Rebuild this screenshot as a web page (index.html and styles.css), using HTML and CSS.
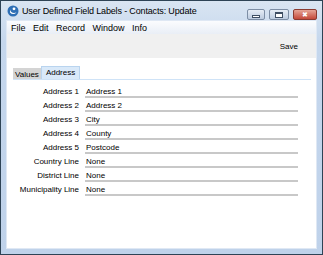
FILE: index.html
```html
<!DOCTYPE html>
<html lang="en">
<head>
  <meta charset="UTF-8" />
  <title>User Defined Field Labels - Contacts: Update</title>
  <link rel="stylesheet" href="styles.css">
</head>
<body>
  <div class="window">
    <div class="titlebar">
      <svg class="app-icon" width="12" height="12" viewBox="0 0 12 12">
        <circle cx="6" cy="6" r="5.5" fill="#2f6fb5"/>
        <path d="M3 4.5 Q4 9 9.5 7.5 Q6 10.5 3 7.5 Z" fill="#ffffff"/>
        <circle cx="7" cy="3.8" r="1.4" fill="#ffffff"/>
      </svg>
      <span class="title">User Defined Field Labels - Contacts: Update</span>
      <div class="controls">
        <span class="ctl min"><span class="min-glyph"></span></span>
        <span class="ctl max"><span class="max-glyph"></span></span>
        <span class="ctl close"><span class="x-glyph">&#x2716;</span></span>
      </div>
    </div>

    <div class="client">
      <div class="menubar">
        <span>File</span>
        <span>Edit</span>
        <span>Record</span>
        <span>Window</span>
        <span>Info</span>
      </div>

      <div class="toolbar">
        <span class="save">Save</span>
      </div>

      <div class="content">
        <div class="tabs">
          <span class="tab">Values</span>
          <span class="tab active">Address</span>
        </div>

        <div class="fields">
          <div class="row"><label>Address 1</label><span class="value">Address 1</span></div>
          <div class="row"><label>Address 2</label><span class="value">Address 2</span></div>
          <div class="row"><label>Address 3</label><span class="value">City</span></div>
          <div class="row"><label>Address 4</label><span class="value">County</span></div>
          <div class="row"><label>Address 5</label><span class="value">Postcode</span></div>
          <div class="row"><label>Country Line</label><span class="value">None</span></div>
          <div class="row"><label>District Line</label><span class="value">None</span></div>
          <div class="row"><label>Municipality Line</label><span class="value">None</span></div>
        </div>
      </div>
    </div>
  </div>
</body>
</html>
```

FILE: styles.css
```css
body {
  margin: 0;
  font-family: "Liberation Sans", Arial, sans-serif;
  font-size: 8px;
  color: #000;
}

.window {
  width: 323px;
  height: 255px;
  box-sizing: border-box;
  border: 1px solid #2e4355;
  background: linear-gradient(#d9e5f2, #c5d7ed 40px, #bfd2ea);
  display: flex;
  flex-direction: column;
}

.titlebar {
  height: 19px;
  display: flex;
  align-items: center;
  padding: 0 5px 0 6px;
}

.app-icon {
  margin-right: 3px;
}

.title {
  font-size: 9px;
  letter-spacing: -0.15px;
  color: #000;
  flex: 1;
}

.controls {
  display: flex;
  gap: 4px;
  align-self: flex-start;
  margin-top: 8px;
}

.ctl {
  width: 18px;
  height: 11px;
  box-sizing: border-box;
  border: 1px solid #7d8ea5;
  border-radius: 2px;
  background: linear-gradient(#e6edf6, #bccbdf);
  display: flex;
  align-items: center;
  justify-content: center;
}

.ctl.max {
  width: 20px;
}

.ctl.close {
  width: 24px;
  border-color: #8a3b31;
  background: linear-gradient(#e6a597, #c4493a);
}

.min-glyph {
  width: 6px;
  height: 1px;
  border: 1px solid #3e4e63;
  background: #fff;
  margin-top: 3px;
}

.max-glyph {
  width: 6px;
  height: 3px;
  border: 1px solid #3e4e63;
  border-top-width: 2px;
  background: #fff;
}

.x-glyph {
  color: #fff;
  font-size: 7px;
  line-height: 1;
}

.client {
  flex: 1;
  margin: 0 5px 5px 5px;
  border: 1px solid #dfe8f4;
  background: #fff;
  display: flex;
  flex-direction: column;
}

.menubar {
  height: 13px;
  display: flex;
  align-items: center;
  padding-left: 4px;
  font-size: 9px;
  background: linear-gradient(#fbfcfe, #e9eef6);
}

.menubar span {
  margin-right: 7.5px;
}

.toolbar {
  height: 24px;
  background: #f0f0f0;
  display: flex;
  align-items: center;
  justify-content: flex-end;
  padding-right: 18px;
}

.content {
  flex: 1;
  padding: 8px 5px 0 6px;
}

.tabs {
  display: flex;
  border-bottom: 1px solid #cfe3f7;
  height: 13px;
}

.tab {
  padding: 2px 2px 0 2px;
  background: #d4d4d4;
  color: #000;
  margin-top: 2px;
}

.tab.active {
  background: #d9e9f9;
  border: 1px solid #b9d4ef;
  border-bottom: none;
  margin-top: 0;
  padding: 1px 4px 0 4px;
}

.fields {
  padding-top: 5px;
}

.row {
  display: flex;
  align-items: flex-end;
  height: 14px;
}

.row label {
  width: 66px;
  text-align: right;
  padding-right: 6px;
  line-height: 9px;
  padding-bottom: 3px;
}

.value {
  width: 212px;
  line-height: 9px;
  border-bottom: 2px solid #c8c8c8;
  padding-left: 1px;
  margin-bottom: 1px;
}
```
